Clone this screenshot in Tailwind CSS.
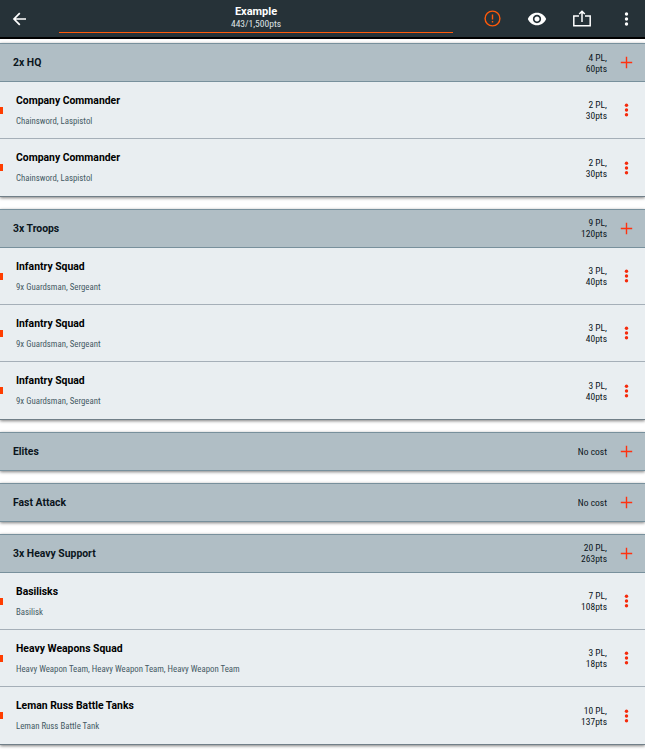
<!DOCTYPE html>
<html lang="en">
<head>
    <meta charset="UTF-8">
    <meta name="viewport" content="width=device-width, initial-scale=1.0">
    <title>Example - 443/1,500pts</title>
    <script src="https://cdn.jsdelivr.net/npm/@tailwindcss/browser@4"></script>
</head>
<body class="h-[750px] overflow-hidden bg-white font-['Roboto',sans-serif] text-[#0b151c]">
    <header class="flex h-[39px] border-b-2 border-black bg-[#263238] text-white">
        <button class="flex w-[59px] items-center pl-3">
            <svg class="size-4" viewBox="0 0 16 16" fill="none" stroke="currentColor" stroke-width="1.7">
                <path d="M14 8H2M7.8 2.2L2 8l5.8 5.8"/>
            </svg>
        </button>
        <div class="flex h-[33px] w-[394px] flex-col items-center border-b border-[#ff5a0a] pt-[5px] text-center shadow-[0_-1px_0_#8f4419]">
            <h1 class="text-[11px] leading-[14px] font-bold">Example</h1>
            <div class="-mt-px font-['Roboto_Condensed','Roboto',sans-serif] text-[9.5px] leading-[11px] font-stretch-condensed text-[#dfe3e5]">443/1,500pts</div>
        </div>
        <div class="flex flex-1 items-center">
            <svg class="ml-[31px] size-[17px]" viewBox="0 0 17 17" fill="none" stroke="#ff5a0a" stroke-width="1.4">
                <circle cx="8.5" cy="8.5" r="7.4"/>
                <path d="M8.5 4.5v5M8.5 11v1.6"/>
            </svg>
            <svg class="ml-[26px] size-5" viewBox="0 0 24 24" fill="currentColor">
                <path d="M12 4.5C7 4.5 2.73 7.61 1 12c1.73 4.39 6 7.5 11 7.5s9.27-3.11 11-7.5c-1.73-4.39-6-7.5-11-7.5zM12 17c-2.76 0-5-2.24-5-5s2.24-5 5-5 5 2.24 5 5-2.24 5-5 5zm0-8c-1.66 0-3 1.34-3 3s1.34 3 3 3 3-1.34 3-3-1.34-3-3-3z"/>
            </svg>
            <svg class="ml-[25px] h-[18px] w-5" viewBox="0 0 20 18" fill="none" stroke="currentColor" stroke-width="1.5">
                <path d="M7 6H1.8v9.7h16.4V6H13M10 12V1.5M7.2 4L10 1.2 12.8 4"/>
            </svg>
            <svg class="ml-8 h-4 w-[5px]" viewBox="0 0 5 16" fill="currentColor">
                <circle cx="2.5" cy="3" r="1.7"/><circle cx="2.5" cy="8" r="1.7"/><circle cx="2.5" cy="13" r="1.7"/>
            </svg>
        </div>
    </header>

    <main id="roster" class="flex flex-col gap-3 pt-1"></main>

    <script>
        const roster = [
            { title: '2x HQ', cost: '4 PL,<br>60pts', units: [
                ['Company Commander', 'Chainsword, Laspistol', '2 PL,<br>30pts'],
                ['Company Commander', 'Chainsword, Laspistol', '2 PL,<br>30pts'],
            ]},
            { title: '3x Troops', cost: '9 PL,<br>120pts', units: [
                ['Infantry Squad', '9x Guardsman, Sergeant', '3 PL,<br>40pts'],
                ['Infantry Squad', '9x Guardsman, Sergeant', '3 PL,<br>40pts'],
                ['Infantry Squad', '9x Guardsman, Sergeant', '3 PL,<br>40pts'],
            ]},
            { title: 'Elites', cost: 'No cost', units: [] },
            { title: 'Fast Attack', cost: 'No cost', units: [] },
            { title: '3x Heavy Support', cost: '20 PL,<br>263pts', units: [
                ['Basilisks', 'Basilisk', '7 PL,<br>108pts'],
                ['Heavy Weapons Squad', 'Heavy Weapon Team, Heavy Weapon Team, Heavy Weapon Team', '3 PL,<br>18pts'],
                ['Leman Russ Battle Tanks', 'Leman Russ Battle Tank', '10 PL,<br>137pts'],
            ]},
        ];

        const cost = (text) => `
            <div class="ml-auto text-right font-['Roboto_Condensed','Roboto',sans-serif] text-[9.5px] leading-[11px] font-stretch-condensed">${text}</div>`;

        const unitRow = ([name, gear, price]) => `
            <div class="flex h-[57.33px] items-center border-b border-[#a5afb8] bg-[#e9eef1] pt-[0.6px] pr-[16px] last:border-[#717f88]">
                <span class="h-[7px] w-[3px] bg-[#ff3d00]"></span>
                <div class="pl-[13px]">
                    <h3 class="text-[10.4px] leading-[14px] font-bold text-black">${name}</h3>
                    <p class="mt-[7px] font-['Roboto_Condensed','Roboto',sans-serif] text-[8.8px] leading-[12px] font-stretch-condensed text-[#455a64]">${gear}</p>
                </div>
                ${cost(price)}
                <svg class="ml-[17px] h-4 w-[5px]" viewBox="0 0 5 16" fill="#f52a0c">
                    <circle cx="2.5" cy="3.2" r="1.7"/><circle cx="2.5" cy="8" r="1.7"/><circle cx="2.5" cy="12.8" r="1.7"/>
                </svg>
            </div>`;

        const section = ({ title, cost: total, units }) => `
            <section class="shadow-[0_1px_3px_rgba(0,0,0,0.5)]">
                <div class="flex h-[39px] items-center border-y border-[#78909c] bg-[#b0bec5] pr-[12px] pl-[13px]">
                    <h2 class="pt-px text-[10.4px] leading-[14px] font-bold">${title}</h2>
                    ${cost(total)}
                    <svg class="ml-[13px] size-[13px]" viewBox="0 0 13 13" stroke="#ff3210" stroke-width="1.4">
                        <path d="M6.5 .8v11.4M.8 6.5h11.4"/>
                    </svg>
                </div>
                ${units.map(unitRow).join('')}
            </section>`;

        document.getElementById('roster').innerHTML = roster.map(section).join('');
    </script>
</body>
</html>
